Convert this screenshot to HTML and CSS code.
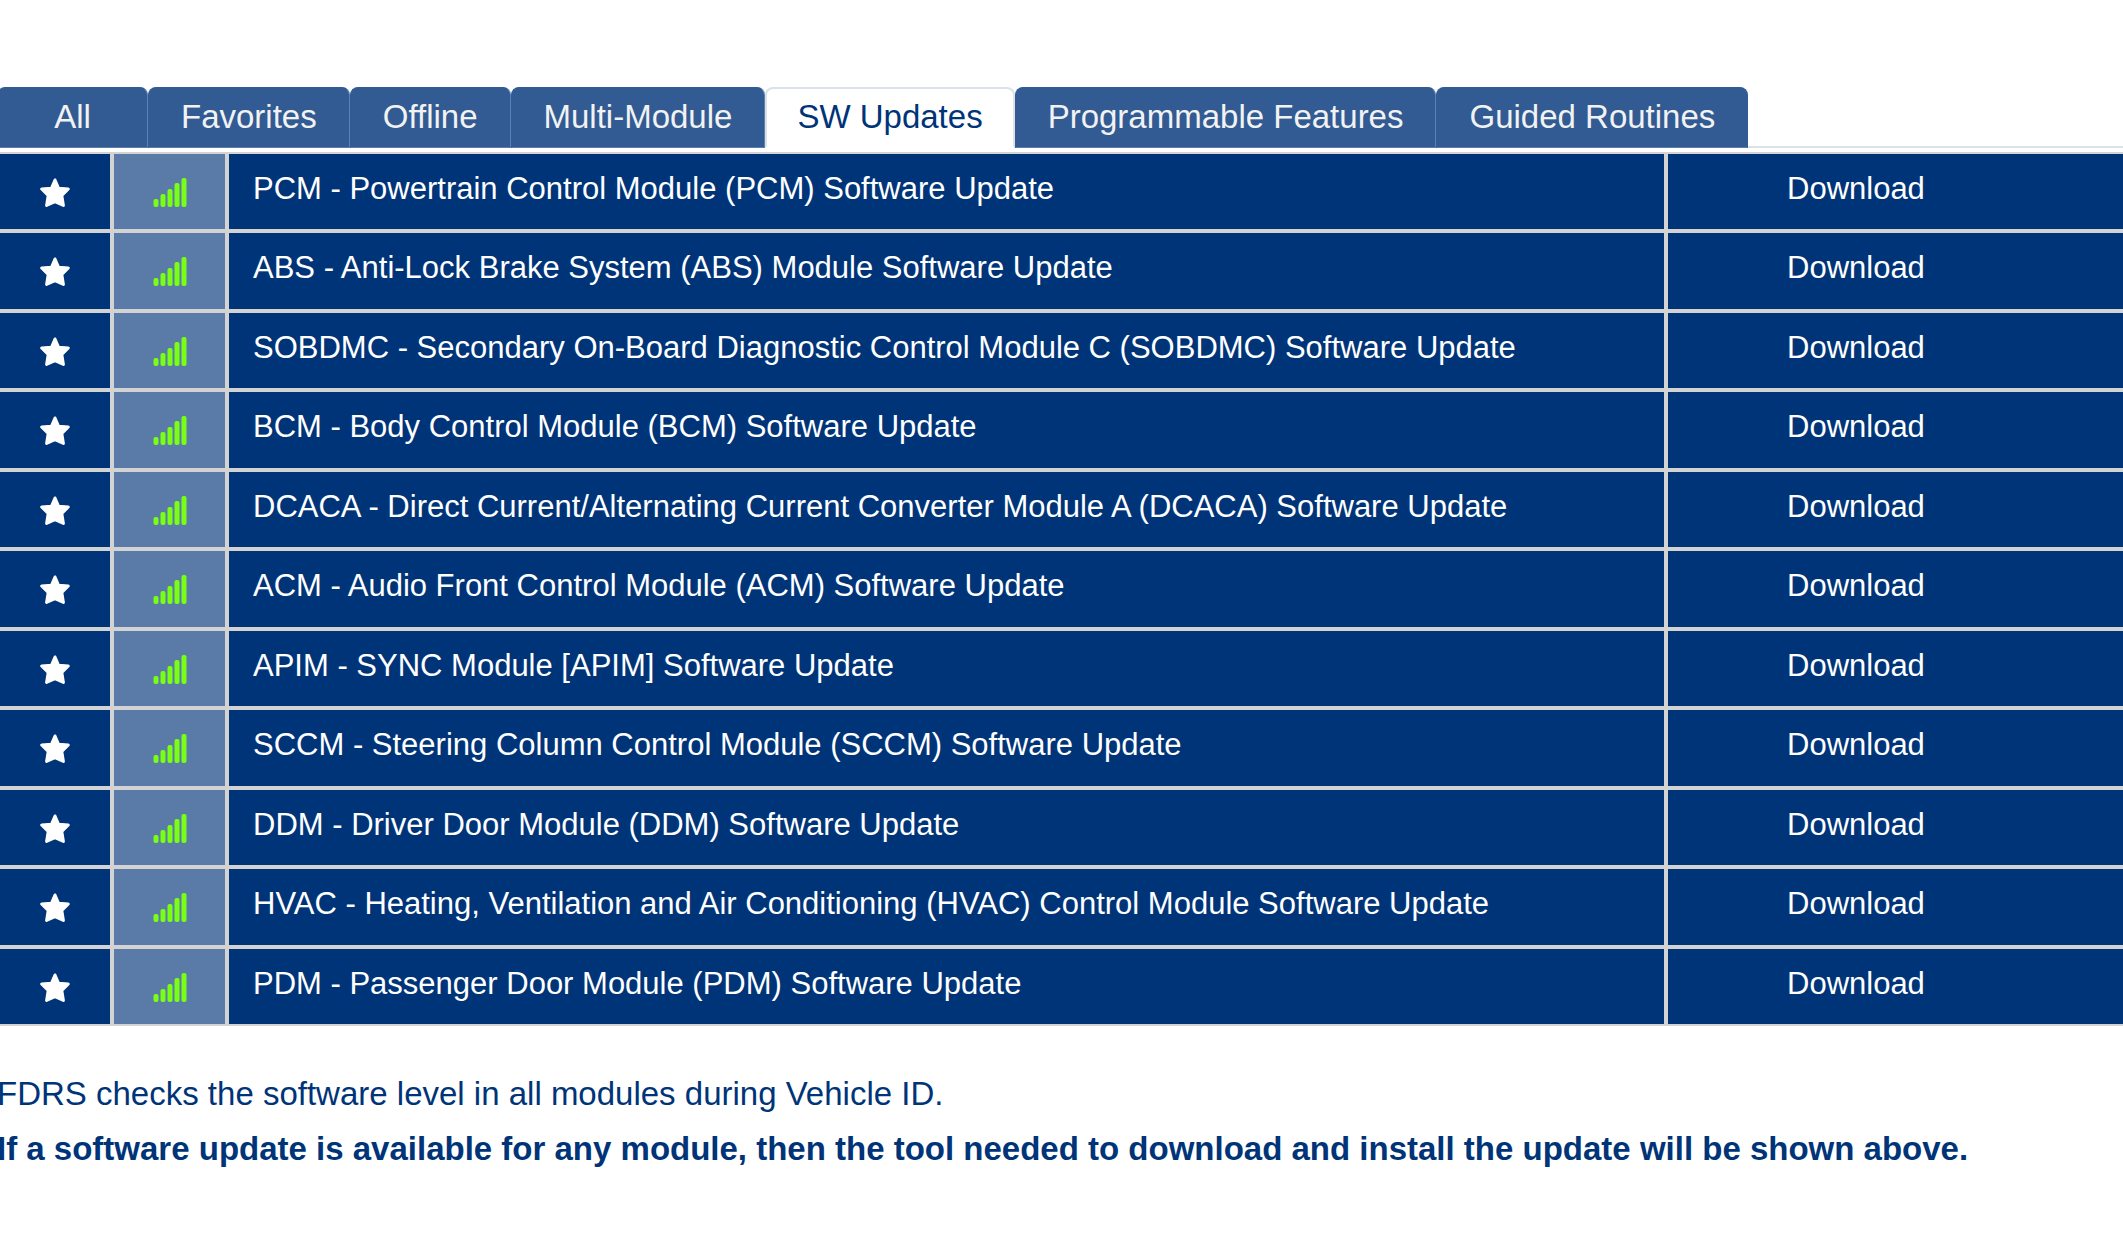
FILE: index.html
```html
<!DOCTYPE html>
<html lang="en">
<head>
<meta charset="utf-8">
<title>SW Updates</title>
<link rel="stylesheet" href="styles.css">
</head>
<body>
<svg class="symbols" aria-hidden="true">
  <symbol id="star" viewBox="0 0 30 30">
    <path d="M15 2 18.6 10.3 28.3 11 21.8 17.5 23.4 27.4 15 23.6 6.6 27.4 8.2 17.5 1.7 11 11.4 10.3Z" fill="currentColor" stroke="currentColor" stroke-width="3" stroke-linejoin="round"/>
  </symbol>
  <symbol id="signal" viewBox="0 0 34 30">
    <g fill="currentColor">
      <rect x="0.5" y="21" width="5" height="8" rx="2"/>
      <rect x="7.5" y="16" width="5" height="13" rx="2"/>
      <rect x="14.5" y="11" width="5" height="18" rx="2"/>
      <rect x="21.5" y="5" width="5" height="24" rx="2"/>
      <rect x="28.5" y="0" width="5" height="29" rx="2"/>
    </g>
  </symbol>
</svg>
<main class="page">
  <nav class="tabs" role="tablist">
    <button class="tab tab-first" role="tab">All</button>
    <button class="tab" role="tab">Favorites</button>
    <button class="tab" role="tab">Offline</button>
    <button class="tab" role="tab">Multi-Module</button>
    <button class="tab tab-active" role="tab" aria-selected="true">SW Updates</button>
    <button class="tab" role="tab">Programmable Features</button>
    <button class="tab" role="tab">Guided Routines</button>
  </nav>
  <table class="updates">
    <colgroup><col class="col-star"><col class="col-signal"><col><col class="col-action"></colgroup>
    <tbody>
      <tr><td class="icon-cell"><button class="star" aria-label="Favorite"><svg class="star-icon"><use href="#star"/></svg></button></td><td class="icon-cell signal"><svg class="signal-icon"><use href="#signal"/></svg></td><td class="name">PCM - Powertrain Control Module (PCM) Software Update</td><td class="action"><button class="download">Download</button></td></tr>
      <tr><td class="icon-cell"><button class="star" aria-label="Favorite"><svg class="star-icon"><use href="#star"/></svg></button></td><td class="icon-cell signal"><svg class="signal-icon"><use href="#signal"/></svg></td><td class="name">ABS - Anti-Lock Brake System (ABS) Module Software Update</td><td class="action"><button class="download">Download</button></td></tr>
      <tr><td class="icon-cell"><button class="star" aria-label="Favorite"><svg class="star-icon"><use href="#star"/></svg></button></td><td class="icon-cell signal"><svg class="signal-icon"><use href="#signal"/></svg></td><td class="name">SOBDMC - Secondary On-Board Diagnostic Control Module C (SOBDMC) Software Update</td><td class="action"><button class="download">Download</button></td></tr>
      <tr><td class="icon-cell"><button class="star" aria-label="Favorite"><svg class="star-icon"><use href="#star"/></svg></button></td><td class="icon-cell signal"><svg class="signal-icon"><use href="#signal"/></svg></td><td class="name">BCM - Body Control Module (BCM) Software Update</td><td class="action"><button class="download">Download</button></td></tr>
      <tr><td class="icon-cell"><button class="star" aria-label="Favorite"><svg class="star-icon"><use href="#star"/></svg></button></td><td class="icon-cell signal"><svg class="signal-icon"><use href="#signal"/></svg></td><td class="name">DCACA - Direct Current/Alternating Current Converter Module A (DCACA) Software Update</td><td class="action"><button class="download">Download</button></td></tr>
      <tr><td class="icon-cell"><button class="star" aria-label="Favorite"><svg class="star-icon"><use href="#star"/></svg></button></td><td class="icon-cell signal"><svg class="signal-icon"><use href="#signal"/></svg></td><td class="name">ACM - Audio Front Control Module (ACM) Software Update</td><td class="action"><button class="download">Download</button></td></tr>
      <tr><td class="icon-cell"><button class="star" aria-label="Favorite"><svg class="star-icon"><use href="#star"/></svg></button></td><td class="icon-cell signal"><svg class="signal-icon"><use href="#signal"/></svg></td><td class="name">APIM - SYNC Module [APIM] Software Update</td><td class="action"><button class="download">Download</button></td></tr>
      <tr><td class="icon-cell"><button class="star" aria-label="Favorite"><svg class="star-icon"><use href="#star"/></svg></button></td><td class="icon-cell signal"><svg class="signal-icon"><use href="#signal"/></svg></td><td class="name">SCCM - Steering Column Control Module (SCCM) Software Update</td><td class="action"><button class="download">Download</button></td></tr>
      <tr><td class="icon-cell"><button class="star" aria-label="Favorite"><svg class="star-icon"><use href="#star"/></svg></button></td><td class="icon-cell signal"><svg class="signal-icon"><use href="#signal"/></svg></td><td class="name">DDM - Driver Door Module (DDM) Software Update</td><td class="action"><button class="download">Download</button></td></tr>
      <tr><td class="icon-cell"><button class="star" aria-label="Favorite"><svg class="star-icon"><use href="#star"/></svg></button></td><td class="icon-cell signal"><svg class="signal-icon"><use href="#signal"/></svg></td><td class="name">HVAC - Heating, Ventilation and Air Conditioning (HVAC) Control Module Software Update</td><td class="action"><button class="download">Download</button></td></tr>
      <tr><td class="icon-cell"><button class="star" aria-label="Favorite"><svg class="star-icon"><use href="#star"/></svg></button></td><td class="icon-cell signal"><svg class="signal-icon"><use href="#signal"/></svg></td><td class="name">PDM - Passenger Door Module (PDM) Software Update</td><td class="action"><button class="download">Download</button></td></tr>
    </tbody>
  </table>
  <section class="notes">
    <p class="note">FDRS checks the software level in all modules during Vehicle ID.</p>
    <p class="note note-strong">If a software update is available for any module, then the tool needed to download and install the update will be shown above.</p>
  </section>
</main>
</body>
</html>
```

FILE: styles.css
```css
* { box-sizing: border-box; }

body {
  margin: 0;
  background: #fff;
  color: #003478;
  font-family: "Liberation Sans", Arial, sans-serif;
}

button {
  margin: 0;
  padding: 0;
  border: 0;
  background: none;
  color: inherit;
  font: inherit;
  cursor: pointer;
}

.symbols { display: none; }

.page { padding-top: 87px; }

/* Tab strip */
.tabs {
  display: flex;
  margin-left: -3px;
  border-bottom: 2px solid #dce1e7;
}

.tab {
  height: 61px;
  margin-bottom: -2px;
  padding: 0 32px 2px;
  border: 1px solid #315b92;
  border-right-color: #5583b5;
  border-bottom-color: #5c7da9;
  border-radius: 8px 8px 0 0;
  background: #315b92;
  color: #f2f2f2;
  font-size: 33px;
  line-height: 36px;
  white-space: nowrap;
}

.tab-first { min-width: 151px; }

.tab:last-child { border-right-color: #315b92; }

.tab-active {
  padding: 0 30px 2px;
  border: 2px solid #dce1e7;
  border-bottom-color: #fff;
  background: #fff;
  color: #003478;
}

/* Update list */
.updates {
  width: 100%;
  margin-top: 4px;
  border-spacing: 0;
  table-layout: fixed;
  font-size: 31px;
  line-height: 36px;
}

.col-star { width: 112px; }
.col-signal { width: 115px; }
.col-action { width: 457px; }

.updates td {
  height: 79px;
  padding: 17px 24px 0;
  border: 2px solid #d3d3d3;
  background: #003478;
  color: #fff;
  vertical-align: top;
}

.updates tr:nth-child(even) td { height: 80px; }
.updates td:first-child { border-left: 0; }
.updates td:last-child { border-right: 0; }

.updates .icon-cell {
  padding: 24px 0 0;
  line-height: 0;
  text-align: center;
}

.updates .signal {
  background: #5a7ba8;
  color: #78ff14;
}

.updates .action { padding-left: 119px; }

.star-icon { width: 30px; height: 30px; }
.signal-icon { width: 34px; height: 30px; }

/* Notes under the list */
.notes {
  margin: 40px 0 0 -3px;
  padding-bottom: 72px;
}

.note {
  margin: 0;
  font-size: 33px;
  line-height: 55px;
}

.note-strong { font-weight: 700; }
```
